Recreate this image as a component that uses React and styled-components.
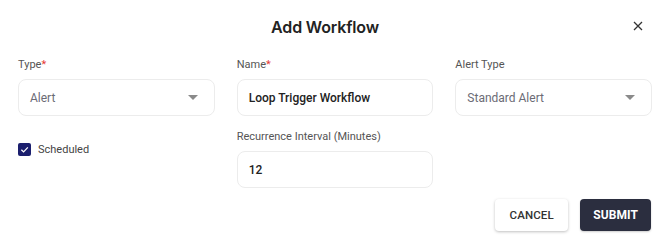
import React from "react";
import styled, { createGlobalStyle } from "styled-components";

const Global = createGlobalStyle`
  html, body { margin: 0; padding: 0; background: #fff; }
  body { font-family: Roboto, "Noto Sans", sans-serif; }
  * { box-sizing: border-box; }
`;

const Dialog = styled.div`
  width: 670px;
  height: 249px;
  background: #fff;
  padding: 0 18px;
  display: flex;
  flex-direction: column;
`;

const Header = styled.div`
  position: relative;
  height: 58px;
  padding-right: 20px;
  display: flex;
  align-items: center;
  justify-content: center;
`;

const Title = styled.h2`
  margin: 0;
  margin-top: -4px;
  font-family: Inter, "Open Sans", sans-serif;
  font-size: 16px;
  font-weight: 600;
  color: #222;
  letter-spacing: -0.15px;
`;

const Close = styled.button`
  position: absolute;
  right: 6px;
  top: 18px;
  width: 16px;
  height: 16px;
  padding: 0;
  border: none;
  background: none;
  display: flex;
  align-items: center;
  justify-content: center;
`;

const Grid = styled.div`
  display: grid;
  grid-template-columns: repeat(3, 1fr);
  column-gap: 22px;
  row-gap: 14px;
`;

const Field = styled.div`
  display: flex;
  flex-direction: column;
  gap: 7px;
`;

const Label = styled.label`
  font-size: 11px;
  line-height: 14px;
  color: #555;
`;

const Req = styled.span`
  color: #e53935;
`;

const Box = styled.div`
  height: 37px;
  border: 1px solid #ececec;
  border-radius: 8px;
  padding: 0 12px 0 11px;
  display: flex;
  align-items: center;
  justify-content: space-between;
  font-size: 12px;
  color: ${(p) => (p.$value ? "#222" : "#6b6b75")};
  font-weight: ${(p) => (p.$value ? 500 : 400)};
`;

const Caret = styled.span`
  width: 0;
  height: 0;
  border-left: 5px solid transparent;
  border-right: 5px solid transparent;
  border-top: 5px solid #8a8a8a;
  margin-right: 4px;
`;

const CheckRow = styled.div`
  display: flex;
  align-items: center;
  gap: 7px;
  align-self: start;
  margin-top: 13px;
  font-size: 11px;
  color: #444;
`;

const CheckBox = styled.span`
  width: 13px;
  height: 13px;
  border-radius: 2px;
  background: #1b1f6e;
  display: flex;
  align-items: center;
  justify-content: center;
`;

const Actions = styled.div`
  display: flex;
  justify-content: flex-end;
  gap: 12px;
  margin-top: 11px;
  padding-right: 1px;
`;

const Button = styled.button`
  height: 32px;
  padding: 0 13px;
  border-radius: 4px;
  border: none;
  font-family: Roboto, sans-serif;
  font-size: ${(p) => (p.$primary ? "12px" : "11.5px")};
  font-weight: ${(p) => (p.$primary ? 700 : 500)};
  letter-spacing: 0.1px;
  color: ${(p) => (p.$primary ? "#fff" : "#333")};
  background: ${(p) => (p.$primary ? "#2b2e3f" : "#fff")};
  box-shadow: ${(p) =>
    p.$primary ? "0 1px 2px rgba(0,0,0,0.2)" : "0 1px 3px rgba(0,0,0,0.25)"};
  min-width: ${(p) => (p.$primary ? "69px" : "73px")};
`;

export default function App() {
  return (
    <>
      <Global />
      <Dialog>
        <Header>
          <Title>Add Workflow</Title>
          <Close aria-label="close">
            <svg width="10" height="10" viewBox="0 0 10 10">
              <path d="M1 1L9 9M9 1L1 9" stroke="#333" strokeWidth="1.3" />
            </svg>
          </Close>
        </Header>
        <Grid>
          <Field>
            <Label>
              Type<Req>*</Req>
            </Label>
            <Box>
              Alert
              <Caret />
            </Box>
          </Field>
          <Field>
            <Label>
              Name<Req>*</Req>
            </Label>
            <Box $value>Loop Trigger Workflow</Box>
          </Field>
          <Field>
            <Label>Alert Type</Label>
            <Box>
              Standard Alert
              <Caret />
            </Box>
          </Field>
          <CheckRow>
            <CheckBox>
              <svg width="9" height="9" viewBox="0 0 10 10">
                <path
                  d="M1.5 5.2L4 7.6L8.7 2.6"
                  fill="none"
                  stroke="#fff"
                  strokeWidth="1.4"
                />
              </svg>
            </CheckBox>
            Scheduled
          </CheckRow>
          <Field>
            <Label>Recurrence Interval (Minutes)</Label>
            <Box $value>12</Box>
          </Field>
        </Grid>
        <Actions>
          <Button>CANCEL</Button>
          <Button $primary>SUBMIT</Button>
        </Actions>
      </Dialog>
    </>
  );
}
